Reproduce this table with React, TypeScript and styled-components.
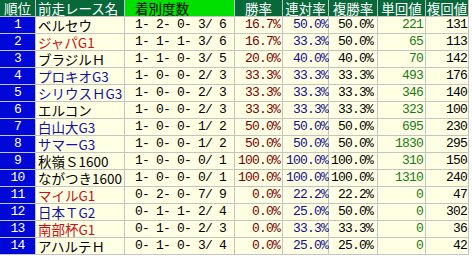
import React from "react";
import styled, { createGlobalStyle } from "styled-components";

const Global = createGlobalStyle`
  html, body { margin: 0; padding: 0; background: #ffffff; }
  #root { width: 472px; height: 258px; overflow: hidden; }
`;

const Table = styled.div`
  display: grid;
  grid-template-columns: 35px 88px 109px 47px 45px 48px 47px 42px;
  grid-auto-rows: 16px;
  gap: 1px;
  width: max-content;
  padding: 0 1px 1px 0;
  background: #c4c4c4;
`;

const HeaderCell = styled.div<{ $bright?: boolean; $align?: string; $pad?: number }>`
  display: flex;
  align-items: center;
  justify-content: ${(p) => (p.$align === "left" ? "flex-start" : "center")};
  background: ${(p) => (p.$bright ? "#00e000" : "#07683a")};
  color: ${(p) => (p.$bright ? "#000000" : "#ffffff")};
  font-family: "Noto Sans CJK JP", sans-serif;
  font-size: 13.5px;
  line-height: 14px;
  padding-left: ${(p) => p.$pad ?? 0}px;
  white-space: nowrap;
`;

const RankCell = styled.div`
  background: #0008d8;
  color: #ffffff;
  font-family: "Liberation Mono", monospace;
  font-size: 13px;
  letter-spacing: -0.8px;
  line-height: 16px;
  text-align: center;
`;

const toneColor: Record<string, string> = {
  red: "#cc1010",
  blue: "#1010a8",
  black: "#000000",
};

const NameCell = styled.div<{ $tone: string }>`
  display: flex;
  align-items: center;
  background: #ffffe4;
  color: ${(p) => toneColor[p.$tone]};
  font-family: "Noto Sans CJK JP", sans-serif;
  font-size: 13.5px;
  line-height: 14px;
  padding-left: 2px;
  white-space: nowrap;
`;

const NumCell = styled.div<{ $color?: string; $align?: string; $pad?: number }>`
  background: #ffffe4;
  color: ${(p) => p.$color ?? "#000000"};
  font-family: "Liberation Mono", monospace;
  font-size: 13px;
  letter-spacing: -0.8px;
  line-height: 16px;
  text-align: ${(p) => p.$align ?? "right"};
  padding: 0 ${(p) => (p.$align === "left" ? 0 : p.$pad ?? 3)}px 0
    ${(p) => (p.$align === "left" ? p.$pad ?? 0 : 0)}px;
  white-space: pre;
`;

type Row = [string, string, string, string, string, string, string, string];

const rows: Row[] = [
  ["ベルセウ", "black", "1- 2- 0- 3/ 6", "16.7%", "50.0%", "50.0%", "221", "131"],
  ["ジャパG1", "red", "1- 1- 1- 3/ 6", "16.7%", "33.3%", "50.0%", "65", "113"],
  ["ブラジルＨ", "black", "1- 1- 0- 3/ 5", "20.0%", "40.0%", "40.0%", "70", "142"],
  ["プロキオG3", "blue", "1- 0- 0- 2/ 3", "33.3%", "33.3%", "33.3%", "493", "176"],
  ["シリウスＨG3", "blue", "1- 0- 0- 2/ 3", "33.3%", "33.3%", "33.3%", "346", "140"],
  ["エルコン", "black", "1- 0- 0- 2/ 3", "33.3%", "33.3%", "33.3%", "323", "100"],
  ["白山大G3", "blue", "1- 0- 0- 1/ 2", "50.0%", "50.0%", "50.0%", "695", "230"],
  ["サマーG3", "blue", "1- 0- 0- 1/ 2", "50.0%", "50.0%", "50.0%", "1830", "295"],
  ["秋嶺Ｓ1600", "black", "1- 0- 0- 0/ 1", "100.0%", "100.0%", "100.0%", "310", "150"],
  ["ながつき1600", "black", "1- 0- 0- 0/ 1", "100.0%", "100.0%", "100.0%", "1310", "240"],
  ["マイルG1", "red", "0- 2- 0- 7/ 9", "0.0%", "22.2%", "22.2%", "0", "47"],
  ["日本ＴG2", "blue", "0- 1- 1- 2/ 4", "0.0%", "25.0%", "50.0%", "0", "302"],
  ["南部杯G1", "red", "0- 1- 0- 2/ 3", "0.0%", "33.3%", "33.3%", "0", "36"],
  ["アハルテＨ", "black", "0- 1- 0- 3/ 4", "0.0%", "25.0%", "25.0%", "0", "42"],
];

export default function App() {
  return (
    <>
      <Global />
      <Table>
        <HeaderCell>順位</HeaderCell>
        <HeaderCell $align="left" $pad={2}>前走レース名</HeaderCell>
        <HeaderCell $bright $align="left" $pad={10}>着別度数</HeaderCell>
        <HeaderCell>勝率</HeaderCell>
        <HeaderCell>連対率</HeaderCell>
        <HeaderCell>複勝率</HeaderCell>
        <HeaderCell>単回値</HeaderCell>
        <HeaderCell>複回値</HeaderCell>
        {rows.map((r, i) => (
          <React.Fragment key={i}>
            <RankCell>{i + 1}</RankCell>
            <NameCell $tone={r[1]}>{r[0]}</NameCell>
            <NumCell $align="left" $pad={10}>{r[2]}</NumCell>
            <NumCell $color="#7a0000" $pad={2}>{r[3]}</NumCell>
            <NumCell $color="#10108a" $pad={0}>{r[4]}</NumCell>
            <NumCell $pad={4}>{r[5]}</NumCell>
            <NumCell $color="#1a7a1a" $pad={2}>{r[6]}</NumCell>
            <NumCell $pad={1}>{r[7]}</NumCell>
          </React.Fragment>
        ))}
      </Table>
    </>
  );
}
